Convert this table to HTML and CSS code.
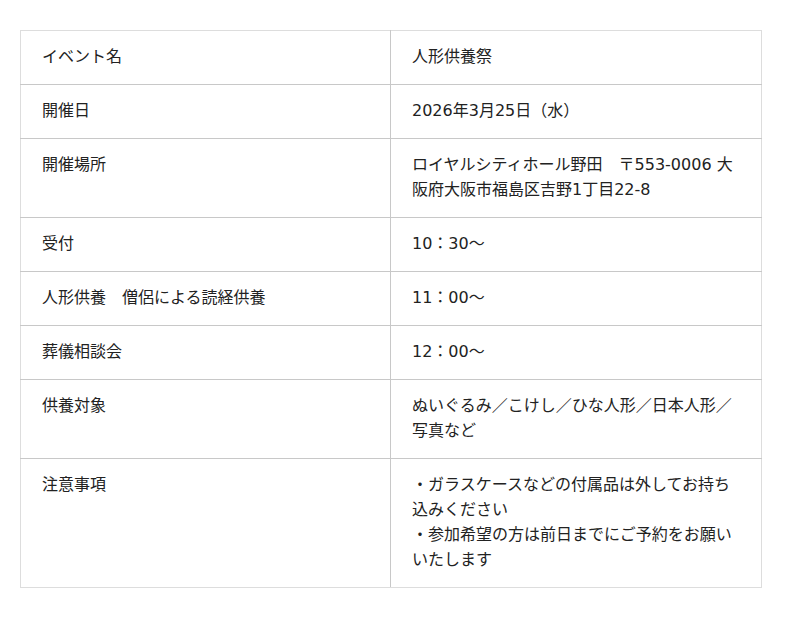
FILE: index.html
```html
<!DOCTYPE html>
<html lang="ja">
<head>
<meta charset="utf-8">
<link rel="stylesheet" href="styles.css">
</head>
<body>
<div class="page">
<table class="info">
<tr><th>イベント名</th><td>人形供養祭</td></tr>
<tr><th>開催日</th><td>2026年3月25日（水）</td></tr>
<tr><th>開催場所</th><td>ロイヤルシティホール野田　〒553-0006 大阪府大阪市福島区吉野1丁目22-8</td></tr>
<tr><th>受付</th><td>10：30〜</td></tr>
<tr><th>人形供養　僧侶による読経供養</th><td>11：00〜</td></tr>
<tr><th>葬儀相談会</th><td>12：00〜</td></tr>
<tr><th>供養対象</th><td>ぬいぐるみ／こけし／ひな人形／日本人形／写真など</td></tr>
<tr><th>注意事項</th><td>・ガラスケースなどの付属品は外してお持ち込みください<br>・参加希望の方は前日までにご予約をお願いいたします</td></tr>
</table>
</div>
</body>
</html>
```
FILE: styles.css
```css
html, body {
  margin: 0;
  padding: 0;
  background: #fff;
}
.page {
  padding: 30px 20px;
}
.info {
  width: 742px;
  border-collapse: collapse;
  table-layout: fixed;
  font-family: "DejaVu Sans", "Noto Sans CJK JP", sans-serif;
  font-size: 16px;
  line-height: 25px;
  color: #222;
  border: 1px solid #ddd;
}
.info th,
.info td {
  text-align: left;
  vertical-align: top;
  font-weight: normal;
  padding: 13px 21px 15px;
  border-top: 1px solid #c8c8c8;
  border-bottom: 1px solid #c8c8c8;
}
.info th {
  width: 327px;
  border-right: 1px solid #c8c8c8;
}
.info tr:first-child th,
.info tr:first-child td {
  border-top-color: #ddd;
}
.info tr:last-child th,
.info tr:last-child td {
  border-bottom-color: #ddd;
}
```
